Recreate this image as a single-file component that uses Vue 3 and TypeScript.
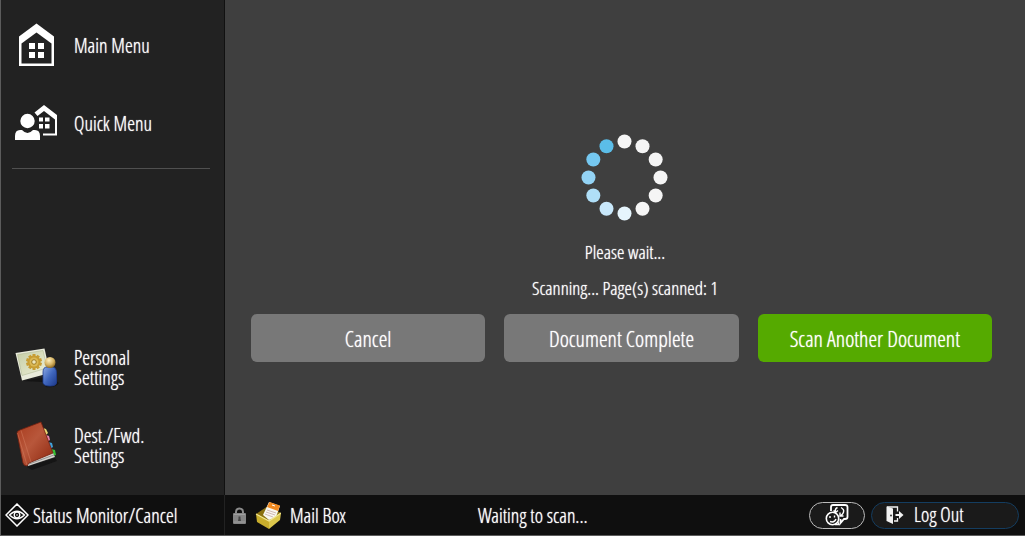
<script setup lang="ts">
import { ref } from 'vue'

interface Dot {
  x: number
  y: number
  fill: string
}

const dotColors: string[] = [
  '#f5f5f5', '#f5f5f5', '#f5f5f5', '#f5f5f5', '#f5f5f5', '#f5f5f5',
  '#e6f5fd', '#c9e8fb', '#b0dff8', '#93d3f5', '#75c8f1', '#5bbde8',
]

const dots: Dot[] = dotColors.map((fill, i) => {
  const angle = (i * Math.PI) / 6
  return { x: 43.5 + 36 * Math.sin(angle), y: 44.5 - 36 * Math.cos(angle), fill }
})

const teeth: number[] = Array.from({ length: 10 }, (_, i) => i * 36)
const pagesScanned = ref<number>(1)
</script>

<template>
  <div class="screen">
    <nav class="sidebar" aria-label="Menu">
      <button class="nav-item" type="button">
        <span class="nav-icon">
          <svg width="36" height="44" viewBox="0 0 36 44" aria-hidden="true">
            <path d="M18.500 0.500 L36 13.500 V43 H1 V13.500 Z" fill="#fff" />
            <path d="M18.500 9.500 L33.500 20.500 V40.500 H3.500 V20.500 Z" fill="#222" />
            <path d="M11 20h6v6h-6zM20 20h6v6h-6zM11 29h6v6h-6zM20 29h6v6h-6z" fill="#fff" />
          </svg>
        </span>
        <span class="label">Main Menu</span>
      </button>
      <button class="nav-item" type="button">
        <span class="nav-icon">
          <svg width="42" height="36" viewBox="0 0 42 36" aria-hidden="true">
            <path d="M19.500 7.500 L29 0 L42 10 V30.500 H28 V28.500 H40 V14.500 L29 6 L22.500 11 Z" fill="#fff" />
            <path d="M24 12.500h4v4h-4zM30 12.500h4.500v4h-4.500zM24 19h4v4.500h-4zM30 19h4.500v4.500h-4.500z" fill="#fff" />
            <circle cx="12.500" cy="16" r="8" fill="#222" />
            <circle cx="12.500" cy="16" r="7.200" fill="#fff" />
            <path d="M0 35 V31 Q0 25 5 25 H7 Q12.500 31 18 25 H20 Q25 25 25 31 V35 Z" fill="#fff" />
          </svg>
        </span>
        <span class="label">Quick Menu</span>
      </button>
      <hr class="divider" />
      <button class="nav-item push-down" type="button">
        <span class="nav-icon">
          <svg width="46" height="44" viewBox="-1 0 46 44" aria-hidden="true">
            <defs>
              <linearGradient id="photo" x1="0" y1="0" x2="1" y2="1">
                <stop offset="0" stop-color="#c5cda5" />
                <stop offset="1" stop-color="#eef0d9" />
              </linearGradient>
              <linearGradient id="body" x1="0" y1="0" x2="1" y2="1">
                <stop offset="0" stop-color="#8ca9e5" />
                <stop offset="0.500" stop-color="#3f66bd" />
                <stop offset="1" stop-color="#1c3889" />
              </linearGradient>
              <radialGradient id="head" cx="0.400" cy="0.300" r="0.700">
                <stop offset="0" stop-color="#fff0bf" />
                <stop offset="0.600" stop-color="#d5b261" />
                <stop offset="1" stop-color="#8e6b25" />
              </radialGradient>
            </defs>
            <path d="M9 36 L36 31 L45 38 Q42 43 32 42 L28 37 Z" fill="#141414" />
            <path d="M1.500 8 L30.500 3.500 L36 28 L8 35.500 Z" fill="#e9ebdb" />
            <path d="M3.500 9.500 L29 5.500 L33 23 L8 30.500 Z" fill="url(#photo)" stroke="#a9b28d" stroke-width="0.500" />
            <g transform="translate(20 17)" fill="#c79d34">
              <rect v-for="a in teeth" :key="a" x="-1.500" y="-8" width="3" height="4" :transform="`rotate(${a})`" />
              <circle r="6.500" />
              <circle r="4.500" fill="#dbb955" />
              <circle r="2.300" fill="#ece6bd" stroke="#9f7b24" />
            </g>
            <path d="M29 38 V27 Q29 22 33 22 H38 Q42.500 22 42.500 28 V38 Q42 41 36 41 Q30 41 29 38 Z" fill="url(#body)" stroke="#203e91" stroke-width="0.800" />
            <circle cx="36" cy="17.500" r="5.500" fill="url(#head)" />
          </svg>
        </span>
        <span class="label">Personal<br />Settings</span>
      </button>
      <button class="nav-item" type="button">
        <span class="nav-icon">
          <svg width="44" height="50" viewBox="-1 0 44 50" aria-hidden="true">
            <defs>
              <linearGradient id="cover" x1="0" y1="0" x2="1" y2="1">
                <stop offset="0" stop-color="#a93b1d" />
                <stop offset="0.450" stop-color="#b8573b" />
                <stop offset="1" stop-color="#8c260e" />
              </linearGradient>
            </defs>
            <path d="M12 47 L40 38 L42 41 L17 50 Z" fill="#151515" />
            <path d="M28 8 l3 1 2 4 -3 3z" fill="#e9d773" />
            <path d="M31 15 l3 1 1 4 -3 2z" fill="#e583aa" />
            <path d="M33 22 l4 1 1 4 -3 2z" fill="#3fa1db" />
            <path d="M36 29 l4 1 1 5 -4 1z" fill="#39bd35" />
            <path d="M12 43 L37 31 L40 37 L13 46 Z" fill="#d6d4cf" />
            <path d="M14 44 L39 35" stroke="#777" stroke-width="0.700" />
            <path d="M2 13 Q2 11 5 10 L26 2 L38 33 L14 43 L12 46 Q9 46 8 43 Z" fill="url(#cover)" stroke="#73200f" stroke-width="0.800" />
            <path d="M2.500 13 L12 45 M6 10.500 L16 42" stroke="#d57e60" stroke-width="0.500" fill="none" />
          </svg>
        </span>
        <span class="label">Dest./Fwd.<br />Settings</span>
      </button>
    </nav>

    <main class="content">
      <svg class="spinner" width="88" height="88" viewBox="0 0 88 88" role="img" aria-label="Loading">
        <circle v-for="(dot, i) in dots" :key="i" :cx="dot.x" :cy="dot.y" r="7" :fill="dot.fill" />
      </svg>
      <p class="message">Please wait...</p>
      <p class="message">Scanning... Page(s) scanned: {{ pagesScanned }}</p>
      <div class="actions">
        <button class="action" type="button">Cancel</button>
        <button class="action" type="button">Document Complete</button>
        <button class="action primary" type="button">Scan Another Document</button>
      </div>
    </main>

    <button class="status-monitor" type="button">
      <svg width="24" height="24" viewBox="0 0 24 24" fill="none" stroke="#fff" aria-hidden="true">
        <path d="M12 1 L23 12 L12 23 L1 12 Z" stroke-width="1.500" />
        <path d="M4.500 12 Q12 4.500 19.500 12 Q12 19.500 4.500 12 Z" stroke-width="1.300" />
        <circle cx="12" cy="12" r="2.800" stroke-width="1.300" />
        <circle cx="12" cy="12" r="0.800" fill="#fff" stroke="none" />
      </svg>
      <span class="label">Status Monitor/Cancel</span>
    </button>

    <footer class="statusbar">
      <div class="app-name">
        <svg width="13" height="17" viewBox="0 0 13 17" aria-hidden="true">
          <path d="M3 8 V5 Q3 1.500 6.500 1.500 Q10 1.500 10 5 V8" fill="none" stroke="#8b8b8b" stroke-width="2" />
          <rect x="0" y="6" width="13" height="11" rx="1" fill="#858585" />
          <path d="M1 7.500h11M1 15h11" stroke="#aaa" stroke-width="0.700" />
          <path d="M5.500 9.500h2v2l0.500 2.500h-3l0.500-2.500z" fill="#444" />
        </svg>
        <svg width="26" height="28" viewBox="-1 -1 26 28" aria-hidden="true">
          <path d="M0 12 L12 4 L25 11 L13 20 Z" fill="#8a7010" />
          <path d="M13 0 L24 4 L20 15 L13 18 L7 13 Z" fill="#f7f7f0" />
          <path d="M13.500 0 L24 3.500 L22 9 L11 5 Z" fill="#f18a20" />
          <path d="M16 3l3 1" stroke="#fff" />
          <path d="M11 8l9 3M10 10l9 3M9 12l8 3" stroke="#c9aaa6" stroke-width="0.800" />
          <path d="M0 12 L13 19 V27 L1 20 Z" fill="#c9ae2c" />
          <path d="M13 19 L25 11 L24 18 L13 27 Z" fill="#dcc74c" />
          <path d="M0 12 L13 19 L25 11" fill="none" stroke="#f2e792" stroke-width="1.200" />
        </svg>
        <span class="label">Mail Box</span>
      </div>
      <output class="job-state label">Waiting to scan...</output>
      <button class="pill language" type="button" aria-label="Switch language">
        <svg width="24" height="24" viewBox="0 0 24 24" fill="none" stroke="#fff" aria-hidden="true">
          <path d="M6 8 V4 Q6 2 8 2 H20 Q22.500 2 22.500 4 V14 Q22.500 16 20 16 H19 L15.500 20 V16" stroke-width="1.800" />
          <path d="M12.500 4.500 Q9.500 6 10.500 9 M8.500 7.500 L10.500 9.500 L13 7.500 M16 4.500 Q20.500 7 17.500 11 L15.500 13 M15 9.500 V13 H18.500" stroke-width="1.400" />
          <circle cx="7.500" cy="15.500" r="6.200" fill="#1a1a1a" stroke-width="1.600" />
          <path d="M5 13v2M9.500 12.500v2M5 18.500Q9.500 20 11 16" stroke-width="1.400" />
          <path d="M12.500 18.500l1.500 3h-4" stroke-width="1.500" />
        </svg>
      </button>
      <button class="pill logout" type="button">
        <svg width="18" height="18" viewBox="0 0 18 18" aria-hidden="true">
          <path d="M0.500 0.500 L7 2.500 V18 L0.500 15 Z" fill="#f2f2f2" />
          <circle cx="5" cy="9.500" r="0.900" fill="#222" />
          <path d="M1 1H11.500V5.500M11.500 12V15H8" fill="none" stroke="#f2f2f2" stroke-width="1.300" />
          <path d="M9.500 8H13V5L17.500 9L13 13V10H9.500Z" fill="#f2f2f2" />
        </svg>
        <span>Log Out</span>
      </button>
    </footer>
  </div>
</template>

<style>
body {
  margin: 0;
  background: #3f3f3f;
}
</style>

<style scoped>
.screen {
  box-sizing: border-box;
  display: grid;
  grid-template-columns: 224px 1fr;
  grid-template-rows: 1fr 40px;
  min-height: 100vh;
  border-left: 1px solid #5c5c5c;
  border-bottom: 1px solid #5c5c5c;
  background: #3f3f3f;
  color: #fff;
  font-family: "Open Sans Condensed Light", "Roboto Condensed", "Open Sans", sans-serif;
  font-size: 20px;
  line-height: 20px;
  text-shadow: 0 0 1px #fff;
}

button {
  margin: 0;
  padding: 0;
  border: 0;
  background: none;
  color: inherit;
  font: inherit;
  text-shadow: inherit;
  cursor: pointer;
}

.label {
  padding-top: 2px;
}

.sidebar {
  box-sizing: border-box;
  display: flex;
  flex-direction: column;
  padding: 6px 0 11px;
  border-right: 1px solid #111;
  background: #222;
}

.nav-item {
  display: flex;
  align-items: center;
  gap: 14px;
  height: 78px;
  padding-left: 11px;
  text-align: left;
}

.nav-icon {
  display: flex;
  justify-content: center;
  width: 48px;
}

.divider {
  height: 1px;
  margin: 6px 14px 0 11px;
  border: 0;
  background: #505050;
}

.push-down {
  margin-top: auto;
}

.content {
  display: flex;
  flex-direction: column;
  align-items: center;
  padding-top: 133px;
}

.spinner {
  margin-bottom: 21px;
}

.message {
  margin: 0 0 16px;
  font-size: 19px;
  line-height: 20px;
}

.actions {
  box-sizing: border-box;
  display: grid;
  grid-template-columns: repeat(3, 1fr);
  gap: 19px;
  width: 100%;
  padding: 0 33px 0 26px;
}

.action {
  height: 48px;
  border-radius: 6px;
  background: #787878;
  font-size: 22px;
}

.action.primary {
  background: #55aa00;
}

.status-monitor,
.statusbar {
  display: flex;
  align-items: center;
  background: #0f0f0f;
}

.status-monitor {
  gap: 4px;
  padding-left: 4px;
  border-right: 1px solid #222;
}

.statusbar {
  padding: 0 6px 0 8px;
}

.app-name {
  display: flex;
  align-items: center;
  gap: 9px;
  width: 245px;
}

.job-state {
  flex: 1;
}

.pill {
  box-sizing: border-box;
  display: flex;
  align-items: center;
  height: 27px;
  border: 1px solid #bbb;
  border-radius: 14px;
  background: #1a1a1a;
}

.language {
  justify-content: center;
  width: 56px;
  margin-right: 6px;
}

.logout {
  gap: 10px;
  width: 148px;
  padding-left: 14px;
  border-color: #143d60;
}
</style>
